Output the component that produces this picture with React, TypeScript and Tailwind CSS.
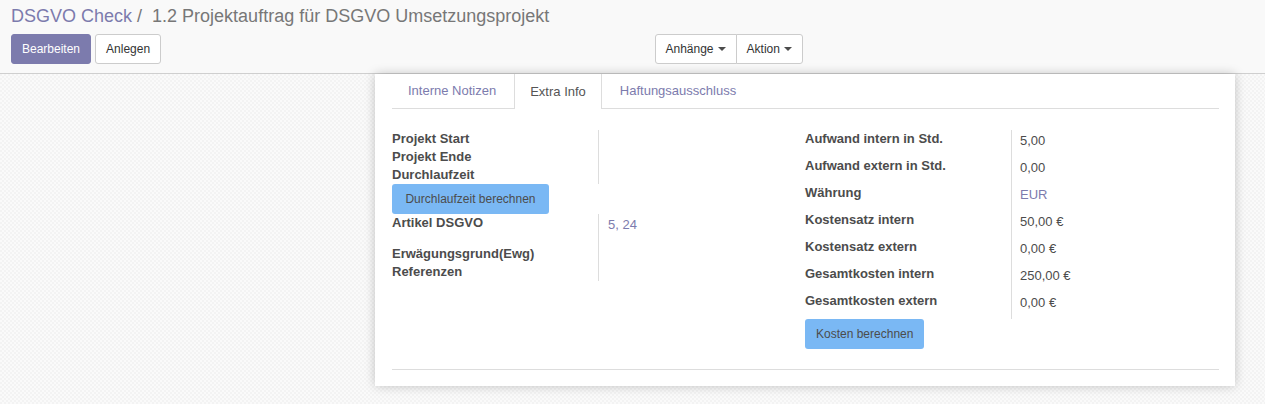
const font = { fontFamily: '"Liberation Sans", Arial, sans-serif' };

function Caret() {
  return <span className="ml-[4px] inline-block h-0 w-0 border-x-[4px] border-t-[4px] border-x-transparent border-t-[#4c4c4c] align-middle" />;
}

type Row = { label: string; value?: string; link?: boolean };

const costRows: Row[] = [
  { label: 'Aufwand intern in Std.', value: '5,00' },
  { label: 'Aufwand extern in Std.', value: '0,00' },
  { label: 'Währung', value: 'EUR', link: true },
  { label: 'Kostensatz intern', value: '50,00 €' },
  { label: 'Kostensatz extern', value: '0,00 €' },
  { label: 'Gesamtkosten intern', value: '250,00 €' },
  { label: 'Gesamtkosten extern', value: '0,00 €' },
];

function CalcButton({ children, wide }: { children: string; wide?: boolean }) {
  return (
    <button
      className={`h-[30px] rounded-[3px] bg-[#7ab8f4] px-[11px] text-[12px] font-normal text-[#4c4c4c] ${wide ? 'w-[157px]' : ''}`}
    >
      {children}
    </button>
  );
}

export default function App() {
  return (
    <div style={font} className="min-h-[404px] bg-[#f6f6f6] bg-[repeating-conic-gradient(#f3f3f3_0_25%,#fafafa_0_50%)] bg-[length:4px_4px] text-[13px] text-[#4c4c4c]">
      {/* Control panel */}
      <div className="h-[74px] border-b border-[#cfcfcf] bg-[#f9f9f9] px-[11px] pt-[6px]">
        <div className="h-[20px] text-[18px] leading-[20px] text-[#777]">
          <span className="text-[#7c7bad]">DSGVO Check</span>
          <span> / </span>
          <span className="ml-[5px]">1.2 Projektauftrag für DSGVO Umsetzungsprojekt</span>
        </div>
        <div className="mt-[8px] flex">
          <div className="flex w-1/2 gap-[4px]">
            <button className="h-[30px] rounded-[3px] border border-[#7c7bad] bg-[#7c7bad] px-[10px] text-[12px] text-white">
              Bearbeiten
            </button>
            <button className="h-[30px] rounded-[3px] border border-[#ccc] bg-white px-[10px] text-[12px] text-[#333]">
              Anlegen
            </button>
          </div>
          <div className="flex w-1/2 pl-[22px]">
            <button className="flex h-[30px] items-center rounded-l-[3px] border border-[#ccc] bg-white px-[10px] text-[12px] text-[#333]">
              Anhänge
              <Caret />
            </button>
            <button className="-ml-px flex h-[30px] items-center rounded-r-[3px] border border-[#ccc] bg-white px-[10px] text-[12px] text-[#333]">
              Aktion
              <Caret />
            </button>
          </div>
        </div>
      </div>

      {/* Sheet */}
      <div className="pl-[375px]">
        <div className="w-[860px] bg-white px-[16px] pb-[16px] pl-[17px] shadow-[0_0_10px_rgba(0,0,0,0.22)]">
          <div className="flex h-[35px] border-b border-[#ddd]">
            <div className="mr-[2px] flex items-center px-[16px] text-[#7c7bad]">Interne Notizen</div>
            <div className="-mb-px mr-[2px] flex items-center border-x border-[#ddd] bg-white px-[15px] text-[#555]">Extra Info</div>
            <div className="flex items-center px-[16px] text-[#7c7bad]">Haftungsausschluss</div>
          </div>

          <div className="mt-[21px] grid grid-cols-[413px_1fr]">
            {/* left group */}
            <div>
              {['Projekt Start', 'Projekt Ende', 'Durchlaufzeit'].map((l) => (
                <div key={l} className="flex h-[18px] leading-[18px]">
                  <div className="w-[206px] font-bold">{l}</div>
                  <div className="flex-1 border-l border-[#ddd]" />
                </div>
              ))}
              <CalcButton wide>Durchlaufzeit berechnen</CalcButton>
              <div className="flex h-[31px] leading-[18px]">
                <div className="w-[206px] font-bold">Artikel DSGVO</div>
                <div className="flex-1 border-l border-[#ddd] pl-[9px] pt-[2px] text-[#7c7bad]">5, 24</div>
              </div>
              {['Erwägungsgrund(Ewg)', 'Referenzen'].map((l) => (
                <div key={l} className="flex h-[18px] leading-[18px]">
                  <div className="w-[206px] font-bold">{l}</div>
                  <div className="flex-1 border-l border-[#ddd]" />
                </div>
              ))}
            </div>

            {/* right group */}
            <div>
              {costRows.map((r) => (
                <div key={r.label} className="flex h-[27px] leading-[18px]">
                  <div className="w-[206px] font-bold">{r.label}</div>
                  <div className={`flex-1 border-l border-[#ddd] pl-[8px] pt-[2px] ${r.link ? 'text-[#7c7bad]' : ''}`}>
                    {r.value}
                  </div>
                </div>
              ))}
              <CalcButton>Kosten berechnen</CalcButton>
            </div>
          </div>

          <div className="mt-[20px] border-t border-[#ddd]" />
        </div>
      </div>
    </div>
  );
}
